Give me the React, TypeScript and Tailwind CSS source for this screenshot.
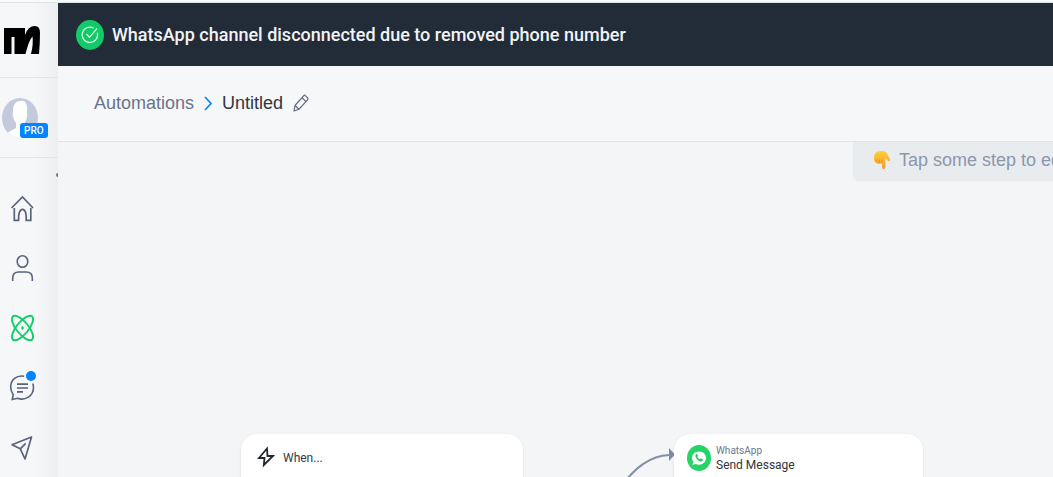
import type { ReactNode } from 'react';

interface NavItemProps {
  label: string;
  active?: boolean;
  children: ReactNode;
}

const NavItem = ({ label, active, children }: NavItemProps) => (
  <a
    href="#"
    aria-label={label}
    className={`relative flex h-7 w-7 items-center justify-center ${active ? 'text-[#10cf67]' : 'text-[#59637b]'}`}
  >
    {children}
  </a>
);

const Logo = () => (
  <svg viewBox="0 0 36 28" className="h-7 w-9" fill="#000">
    <path d="M0 2H21V9Q24 0 31 0Q36 0 36 7Q36 17 35 28H27Q29.500 18 28.500 10.500Q25 14 21.500 28H10.500V11H7.500V28H0Z" />
  </svg>
);

const HomeIcon = () => (
  <svg viewBox="0 0 28 28" className="h-7 w-7" fill="none" stroke="currentColor" strokeWidth="1.7">
    <path d="M3.500 14 14.500 3l10.500 11" />
    <path d="M6.300 14v12.300h4.300c-.2-6 .8-11 3.900-11s4 5 3.700 11h4.600V14" />
  </svg>
);

const UserIcon = () => (
  <svg viewBox="0 0 28 28" className="h-7 w-7" fill="none" stroke="currentColor" strokeWidth="1.600">
    <ellipse cx="14.500" cy="7.500" rx="5.300" ry="5.800" />
    <path d="M4.700 27v-3c0-4 2.500-6 6-6h7.600c3.500 0 6 2 6 6v3" />
  </svg>
);

const AtomIcon = () => (
  <svg viewBox="0 0 28 28" className="h-7 w-7" fill="none" stroke="currentColor" strokeWidth="1.900">
    <ellipse cx="14.500" cy="14" rx="15" ry="6" transform="rotate(51 14.500 14)" />
    <ellipse cx="14.500" cy="14" rx="15" ry="6" transform="rotate(-51 14.500 14)" />
    <path d="M14.500 11.800 16 14 14.500 16.200 13 14Z" fill="currentColor" stroke="none" />
  </svg>
);

const ChatIcon = () => (
  <svg viewBox="0 0 28 28" className="h-7 w-7" fill="none" stroke="currentColor" strokeWidth="1.600">
    <path d="M16 2.200C8.500.8 2.700 6 2.700 13c0 3.700 1.200 6 2.600 7.700L4.200 25.500l5.300-1.200c7.500 2.700 16-2.300 16-10.800 0-1.700-.3-2.800-.8-4" />
    <path d="M9 10.200h11M9 14h11M9 17.800h6" strokeWidth="1.700" />
  </svg>
);

const SendIcon = () => (
  <svg viewBox="0 0 28 28" className="h-7 w-7" fill="none" stroke="currentColor" strokeWidth="1.700" strokeLinejoin="round">
    <path d="M23.500 3 4 10.800l8.300 4L17 25Z" />
    <path d="m12.300 14.800 5.400-5.500" />
  </svg>
);

const Avatar = () => (
  <svg viewBox="0 0 36 40" className="h-10 w-9">
    <defs>
      <clipPath id="avatar-clip">
        <ellipse cx="18" cy="20" rx="18" ry="20" />
      </clipPath>
    </defs>
    <g clipPath="url(#avatar-clip)">
      <path d="M0 0h36v40H0z" fill="#c2cadc" />
      <path d="M11 13C11 6 14 3 19 3c4-1 7 3 6 11 1 5-1 8-2 10v3l13 5v8H3v-4l11-6v-5c-3-4-4-8-3-12Z" fill="#fff" />
    </g>
  </svg>
);

const PencilIcon = () => (
  <svg viewBox="0 0 16 18" className="h-[18px] w-4" fill="none" stroke="#626a80" strokeWidth="1.200" strokeLinejoin="round">
    <path d="M1 17 2 11.500 10.800 1.600q.8-.8 1.600 0l2.200 2.300q.8.800 0 1.700L6 15.300 1 17Z" />
    <path d="m2 11.500 4 3.800M9 3.700l4 3.900" />
  </svg>
);

const PointingHand = () => (
  <svg viewBox="0 0 18 20" className="h-5 w-[18px]">
    <defs>
      <linearGradient id="hand" x1="0" y1="0" x2="0" y2="1">
        <stop offset="0" stopColor="#ffcf32" />
        <stop offset="1" stopColor="#f59b32" />
      </linearGradient>
    </defs>
    <path
      d="M4 1.500 10 1q3 0 4 2.500l3 5.500q.8 2-.8 2.200-1.500 0-2.700-2.200L12.500 8v9.500Q12 19 10.700 19 9.200 19 9 17.500V13q-1 1.500-2.700.7-1.600.5-2.300-.7-1.900.2-2-1.500Q.7 11 1 8.500 1 3.500 4 1.500Z"
      fill="url(#hand)"
    />
    <path d="M4 12.500V9.500M6.500 13V9.500M9 13V9.500" stroke="#e8852b" strokeWidth=".8" />
  </svg>
);

const WhatsAppIcon = () => (
  <svg viewBox="0 0 24 26" className="h-[26px] w-6">
    <ellipse cx="12" cy="13" rx="12" ry="13" fill="#25d366" />
    <path d="M12 6.500c4 0 7 2.800 7 6.500s-3 6.700-7 6.700c-1.200 0-2.300-.3-3.200-.8L5.500 20l.9-3.500C5.600 15.500 5 14.300 5 13c0-3.700 3-6.500 7-6.500Z" fill="#fff" />
    <path d="M9.200 9.200c-1.400 1-.8 3.300 1 5.200s4.300 2.800 5.500 1.200c.5-.7.2-1-.3-1.300l-1.300-.7c-.7-.2-.9.900-1.500.7-1-.4-1.800-1.300-2.200-2.200-.2-.6.800-.8.500-1.500l-.6-1.300c-.3-.4-.8-.4-1.100-.1Z" fill="#25c761" />
  </svg>
);

const Sidebar = () => (
  <aside className="relative flex w-[58px] shrink-0 flex-col bg-linear-to-r from-[#f6f7f9] from-60% to-[#eceef0]">
    <div className="h-[75px] border-b border-[#e1e4e8] pt-[23px] pl-1">
      <Logo />
    </div>
    <div className="h-20 border-b border-[#e1e4e8] pt-5 pl-0.5">
      <button type="button" aria-label="Account" className="relative block">
        <Avatar />
        <span className="absolute top-[25px] left-[18px] rounded-[3px] bg-[#0084ff] px-1 font-['Roboto'] text-[10px] leading-[15px] font-medium text-white">
          PRO
        </span>
      </button>
    </div>
    <nav className="flex flex-col gap-8 pt-9 pl-2">
      <NavItem label="Home"><HomeIcon /></NavItem>
      <NavItem label="Contacts"><UserIcon /></NavItem>
      <NavItem label="Automation" active><AtomIcon /></NavItem>
      <NavItem label="Live Chat">
        <ChatIcon />
        <span className="absolute -top-[3px] right-0 h-2.5 w-2.5 rounded-full bg-[#0084ff]" />
      </NavItem>
      <NavItem label="Broadcasting"><SendIcon /></NavItem>
    </nav>
    {/* Collapse handle */}
    <span className="absolute top-[170px] right-0 h-1 w-0.5 rounded-l-full bg-[#71747a]" />
  </aside>
);

const Banner = () => (
  <div role="status" className="flex h-[63px] items-center gap-2 bg-[#222c38] pl-[18px] text-white">
    <span className="flex h-[30px] w-7 items-center justify-center rounded-[50%] bg-[#12ca68]">
      <svg viewBox="0 0 18 18" className="h-[18px] w-[18px]" fill="none" stroke="#d9ffe8" strokeWidth="1.200">
        <path d="M12.500 2A7.700 7.700 0 1 0 16.300 6.800" />
        <path d="m5.500 8 3 3.300L16 2.500" />
      </svg>
    </span>
    <p className="text-[18px] leading-6 font-medium whitespace-nowrap text-[#f1f3f6]">
      WhatsApp channel disconnected due to removed phone number
    </p>
  </div>
);

const Breadcrumbs = () => (
  <header className="flex h-[76px] items-center border-b border-[#e0e3e7] bg-[#f6f7f9] pb-0.5 pl-9 font-['Liberation_Sans',sans-serif] text-[18px] leading-6">
    <a href="#" className="text-[#69738a]">Automations</a>
    <svg viewBox="0 0 8 16" className="mx-[10px] h-4 w-2" fill="none" stroke="#0a8cf5" strokeWidth="1.800">
      <path d="m1 2 6 6.500-6 6.500" />
    </svg>
    <h1 className="text-[#303640]">Untitled</h1>
    <button type="button" aria-label="Rename" className="ml-[10px]">
      <PencilIcon />
    </button>
  </header>
);

const Canvas = () => (
  <main className="relative flex-1 overflow-hidden bg-[#f3f5f7]">
    <div className="absolute top-0 left-[795px] flex h-[38px] items-center gap-2 rounded-b-md bg-[#e8ecef] px-5 pb-0.5 font-['Liberation_Sans',sans-serif] text-[18px] leading-6 whitespace-nowrap text-[#8b97ac] shadow-xs">
      <PointingHand />
      <span>Tap some step to edit</span>
    </div>

    <svg className="absolute top-[300px] left-[560px] h-12 w-16" viewBox="0 0 64 48" fill="none">
      <path d="M4 43C18 25 32 14 51 13" stroke="#8490a6" strokeWidth="2" />
      <path d="m51 6 6 6.500-6 6.500Z" fill="#7d8ba3" />
    </svg>

    <section className="absolute top-[292px] left-[183px] flex h-60 w-[282px] items-start gap-2 rounded-2xl bg-white px-4 pt-3 text-[#343941] shadow-sm">
      <svg viewBox="0 0 18 22" className="h-[22px] w-[18px]" fill="none" stroke="#24272c" strokeWidth="1.800" strokeLinejoin="miter">
        <path d="M10 2.500 2 12h5.500L6.800 19 16 10h-5.500Z" />
      </svg>
      <h2 className="text-[12px] leading-6">When...</h2>
    </section>

    <section className="absolute top-[292px] left-[616px] flex h-60 w-[249px] items-start gap-[5px] rounded-2xl bg-white px-[13px] pt-[11px] shadow-sm">
      <WhatsAppIcon />
      <div>
        <p className="text-[10px] leading-3 text-[#6b7890]">WhatsApp</p>
        <h2 className="text-[12px] leading-4 text-[#30343b]">Send Message</h2>
      </div>
    </section>
  </main>
);

const App = () => {
  return (
    <div className="flex h-screen flex-col overflow-hidden bg-[#f3f5f7] font-['Roboto',sans-serif]">
      <div className="h-[3px] shrink-0 border-b border-[#dfe3e6] bg-[#f8fbf9]" />
      <div className="flex min-h-0 flex-1">
        <Sidebar />
        <div className="flex min-w-0 flex-1 flex-col">
          <Banner />
          <Breadcrumbs />
          <Canvas />
        </div>
      </div>
    </div>
  );
};

export default App;
